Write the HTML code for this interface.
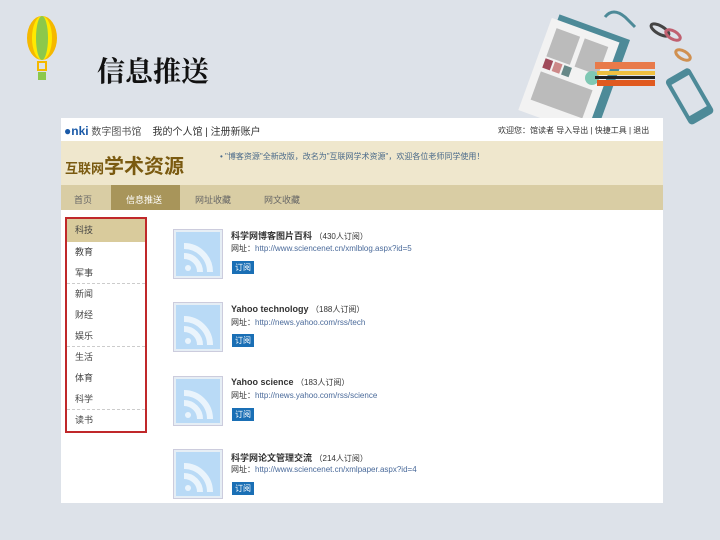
<!DOCTYPE html>
<html><head><meta charset="utf-8"><style>
*{margin:0;padding:0;box-sizing:border-box}
body{width:720px;height:540px;background:#dde2e9;position:relative;overflow:hidden;font-family:"Liberation Sans","Noto Sans CJK SC",sans-serif}
.abs{position:absolute}
.t{font-size:9px;color:#333;white-space:nowrap}
.side div{height:21px;line-height:21px;padding-left:8px;font-size:9px;color:#444}
.rss{width:48px;height:48px;background:#b9daf6;border:2px solid #e6eef5;box-shadow:0 0 0 1px #ccd}
.btn{width:22px;height:13px;background:#1a6fb5;color:#fff;font-size:8px;line-height:13px;text-align:center}
</style></head><body>
<svg class="abs" style="left:22px;top:14px" width="40" height="72" viewBox="0 0 40 72">
<ellipse cx="20" cy="24" rx="15" ry="22" fill="#f5b800"/>
<ellipse cx="20" cy="24" rx="10" ry="22" fill="#ffe900"/>
<ellipse cx="20" cy="24" rx="6" ry="22" fill="#8cc84b"/>
<rect x="16" y="48" width="8" height="8" fill="none" stroke="#f5b800" stroke-width="2"/>
<rect x="16" y="58" width="8" height="8" fill="#8cc84b"/>
</svg>
<div class="abs" style="left:97px;top:50px;font-size:28px;font-weight:bold;color:#111;font-family:'Liberation Serif','Noto Serif CJK SC',serif">信息推送</div>
<svg class="abs" style="left:510px;top:5px" width="210" height="120" viewBox="0 0 210 120">
<g transform="rotate(20 70 70)"><rect x="30" y="20" width="75" height="100" fill="#4d8a98"/><rect x="24" y="26" width="72" height="98" fill="#f2f2f2"/>
<rect x="32" y="34" width="25" height="30" fill="#bbb"/><rect x="62" y="34" width="25" height="30" fill="#bbb"/><rect x="32" y="80" width="55" height="30" fill="#bbb"/>
<rect x="32" y="66" width="8" height="10" fill="#a04a5a"/><rect x="42" y="66" width="8" height="10" fill="#c88"/><rect x="52" y="66" width="8" height="10" fill="#688"/></g>
<circle cx="82" cy="73" r="7" fill="#7fc8b4"/>
<rect x="85" y="57" width="60" height="7" fill="#e87a4a"/><rect x="87" y="66" width="58" height="4" fill="#f0c040"/><rect x="85" y="71" width="60" height="3" fill="#222"/><rect x="87" y="75" width="58" height="6" fill="#e05a20"/>
<path d="M95 12 q8-10 20 0 l10 10" fill="none" stroke="#4d8a98" stroke-width="3"/>
<ellipse cx="150" cy="25" rx="10" ry="4" transform="rotate(30 150 25)" fill="none" stroke="#444" stroke-width="3"/>
<ellipse cx="163" cy="30" rx="8" ry="4" transform="rotate(30 163 30)" fill="none" stroke="#c06070" stroke-width="3"/>
<ellipse cx="173" cy="50" rx="8" ry="4" transform="rotate(30 173 50)" fill="none" stroke="#d09050" stroke-width="3"/>
<g transform="rotate(-30 180 90)"><rect x="165" y="65" width="28" height="52" rx="4" fill="#4d8a98"/><rect x="169" y="72" width="20" height="36" fill="#dde2e9"/></g>
</svg>
<div class="abs" style="left:61px;top:118px;width:602px;height:385px;background:#fff"></div>
<div class="abs t" style="left:64px;top:123px;font-size:10px"><b style="color:#1a5aa8;font-size:12px">●nki</b> <span style="color:#555">数字图书馆</span>&nbsp;&nbsp;&nbsp; 我的个人馆 | 注册新账户</div>
<div class="abs t" style="left:498px;top:125px;font-size:8px">欢迎您：馆读者 导入导出 | 快捷工具 | 退出</div>
<div class="abs" style="left:61px;top:141px;width:602px;height:44px;background:#efe7cd"></div>
<div class="abs" style="left:65px;top:150px;font-size:13px;font-weight:bold;color:#7a5a10;white-space:nowrap">互联网<span style="font-size:20px">学术资源</span></div>
<div class="abs t" style="left:220px;top:151px;font-size:8px;color:#4a6a8a">• "博客资源"全新改版，改名为"互联网学术资源"，欢迎各位老师同学使用！</div>
<div class="abs" style="left:61px;top:185px;width:602px;height:25px;background:#d9cda4"></div>
<div class="abs" style="left:111px;top:185px;width:69px;height:25px;background:#a8955a"></div>
<div class="abs t" style="left:74px;top:193px;color:#666">首页</div>
<div class="abs t" style="left:126px;top:193px;color:#fff">信息推送</div>
<div class="abs t" style="left:195px;top:193px;color:#666">网址收藏</div>
<div class="abs t" style="left:264px;top:193px;color:#666">网文收藏</div>
<div class="abs side" style="left:65px;top:217px;width:82px;height:216px;border:2px solid #c0282a">
<div style="background:#d9cb9c;height:23px;line-height:23px">科技</div><div>教育</div><div style="border-bottom:1px dashed #ccc">军事</div><div>新闻</div><div>财经</div><div style="border-bottom:1px dashed #ccc">娱乐</div><div>生活</div><div>体育</div><div style="border-bottom:1px dashed #ccc">科学</div><div>读书</div>
</div>
<div class="abs rss" style="left:174px;top:230px"></div>
<div class="abs rss" style="left:174px;top:303px"></div>
<div class="abs rss" style="left:174px;top:377px"></div>
<div class="abs rss" style="left:174px;top:450px"></div>
<div class="abs t" style="left:231px;top:229px;font-weight:bold">科学网博客图片百科 <span style="font-weight:normal;font-size:8px">（430人订阅）</span></div>
<div class="abs t" style="left:231px;top:243px;font-size:8px">网址：<span style="color:#4a6a9a">http://www.sciencenet.cn/xmlblog.aspx?id=5</span></div>
<div class="abs btn" style="left:232px;top:261px">订阅</div>
<div class="abs t" style="left:231px;top:304px;font-weight:bold">Yahoo technology <span style="font-weight:normal;font-size:8px">（188人订阅）</span></div>
<div class="abs t" style="left:231px;top:317px;font-size:8px">网址：<span style="color:#4a6a9a">http://news.yahoo.com/rss/tech</span></div>
<div class="abs btn" style="left:232px;top:334px">订阅</div>
<div class="abs t" style="left:231px;top:377px;font-weight:bold">Yahoo science <span style="font-weight:normal;font-size:8px">（183人订阅）</span></div>
<div class="abs t" style="left:231px;top:390px;font-size:8px">网址：<span style="color:#4a6a9a">http://news.yahoo.com/rss/science</span></div>
<div class="abs btn" style="left:232px;top:408px">订阅</div>
<div class="abs t" style="left:231px;top:451px;font-weight:bold">科学网论文管理交流 <span style="font-weight:normal;font-size:8px">（214人订阅）</span></div>
<div class="abs t" style="left:231px;top:464px;font-size:8px">网址：<span style="color:#4a6a9a">http://www.sciencenet.cn/xmlpaper.aspx?id=4</span></div>
<div class="abs btn" style="left:232px;top:482px">订阅</div>
<svg class="abs" style="left:176px;top:232px" width="46" height="264">
<defs><g id="r" fill="none" stroke="#eaf4fc" stroke-width="6"><path d="M8 14 a26 26 0 0 1 26 26"/><path d="M8 24 a16 16 0 0 1 16 16"/><circle cx="12" cy="36" r="3" fill="#eaf4fc" stroke="none"/></g></defs>
<use href="#r"/><use href="#r" y="73"/><use href="#r" y="147"/><use href="#r" y="220"/>
</svg>
</body></html>
